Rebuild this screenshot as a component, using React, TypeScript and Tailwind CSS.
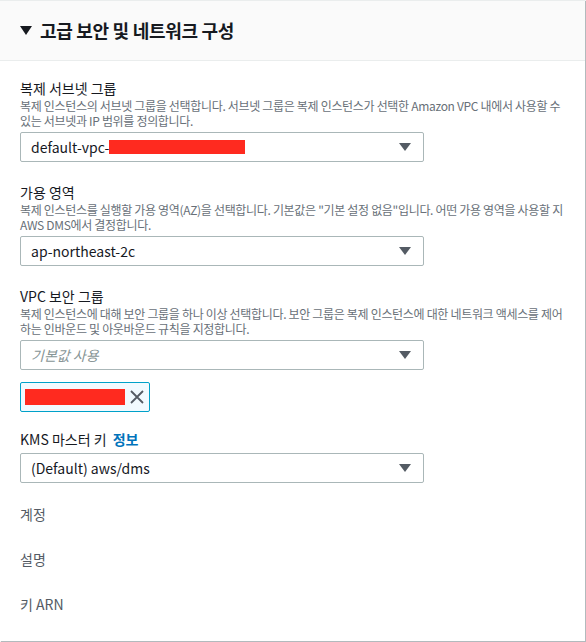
const Caret = () => (
  <svg width="12" height="8" viewBox="0 0 12 8" className="shrink-0">
    <path d="M0 0h12L6 8z" fill="#545b64" />
  </svg>
)

const Field = ({ label, desc, children }: { label: React.ReactNode; desc?: string; children?: React.ReactNode }) => (
  <div className="flex flex-col">
    <div className="text-[14px] leading-[20px] text-[#16191f]">{label}</div>
    {desc && <div className="text-[12px] leading-[15px] text-[#687078] tracking-[-0.32px]">{desc}</div>}
    {children}
  </div>
)

const Select = ({ children, placeholder }: { children: React.ReactNode; placeholder?: boolean }) => (
  <div className="mt-[4px] w-[404px] h-[30px] border border-[#aab7b8] rounded-[2px] bg-white flex items-center justify-between pl-[10px] pr-[12px]">
    <span className={placeholder ? "text-[14px] italic text-[#879596]" : "text-[14px] text-[#16191f]"}>{children}</span>
    <Caret />
  </div>
)

export default function App() {
  return (
    <div
      className="w-[586px] h-[642px] bg-white overflow-hidden"
      style={{ fontFamily: '"Noto Sans CJK KR", "Noto Sans", sans-serif' }}
    >
      <div className="w-[585px] h-[641px] bg-white border-t border-[#eaeded] shadow-[1px_1px_1px_0_rgba(0,28,36,0.3)]">
        {/* header */}
        <div className="h-[60px] bg-[#fafafa] border-b border-[#eaeded] flex items-center px-[20px] gap-[8px]">
          <svg width="12" height="9" viewBox="0 0 12 9">
            <path d="M0 0h12L6 9z" fill="#16191f" />
          </svg>
          <span className="text-[18px] font-bold text-[#16191f] tracking-[-0.3px]">고급 보안 및 네트워크 구성</span>
        </div>

        <div className="px-[20px] pt-[17px] flex flex-col gap-[20px]">
          <Field
            label="복제 서브넷 그룹"
            desc="복제 인스턴스의 서브넷 그룹을 선택합니다. 서브넷 그룹은 복제 인스턴스가 선택한 Amazon VPC 내에서 사용할 수 있는 서브넷과 IP 범위를 정의합니다."
          >
            <Select>
              <span className="flex items-center">
                default-vpc-
                <span className="inline-block w-[136px] h-[14px] bg-[#ff2a1f]" />
              </span>
            </Select>
          </Field>

          <Field
            label="가용 영역"
            desc={'복제 인스턴스를 실행할 가용 영역(AZ)을 선택합니다. 기본값은 "기본 설정 없음"입니다. 어떤 가용 영역을 사용할 지 AWS DMS에서 결정합니다.'}
          >
            <Select>ap-northeast-2c</Select>
          </Field>

          <Field
            label="VPC 보안 그룹"
            desc="복제 인스턴스에 대해 보안 그룹을 하나 이상 선택합니다. 보안 그룹은 복제 인스턴스에 대한 네트워크 액세스를 제어하는 인바운드 및 아웃바운드 규칙을 지정합니다."
          >
            <Select placeholder>기본값 사용</Select>
            <div className="mt-[12px] w-[130px] h-[30px] border border-[#00a1c9] rounded-[2px] bg-[#f1faff] flex items-center pl-[4px] gap-[4px]">
              <span className="w-[100px] h-[16px] bg-[#ff2a1f]" />
              <svg width="16" height="16" viewBox="0 0 16 16">
                <path d="M2 2l12 12M14 2L2 14" stroke="#545b64" strokeWidth="1.8" />
              </svg>
            </div>
          </Field>

          <div className="-mt-[3px]">
            <Field
              label={
                <span>
                  KMS 마스터 키 <span className="ml-[3px] font-bold text-[#0073bb]">정보</span>
                </span>
              }
            >
              <Select>(Default) aws/dms</Select>
            </Field>
          </div>

          <div className="flex flex-col gap-[25px] pt-[1px] text-[14px] leading-[20px] text-[#545b64]">
            <div>계정</div>
            <div>설명</div>
            <div>키 ARN</div>
          </div>
        </div>
      </div>
    </div>
  )
}
